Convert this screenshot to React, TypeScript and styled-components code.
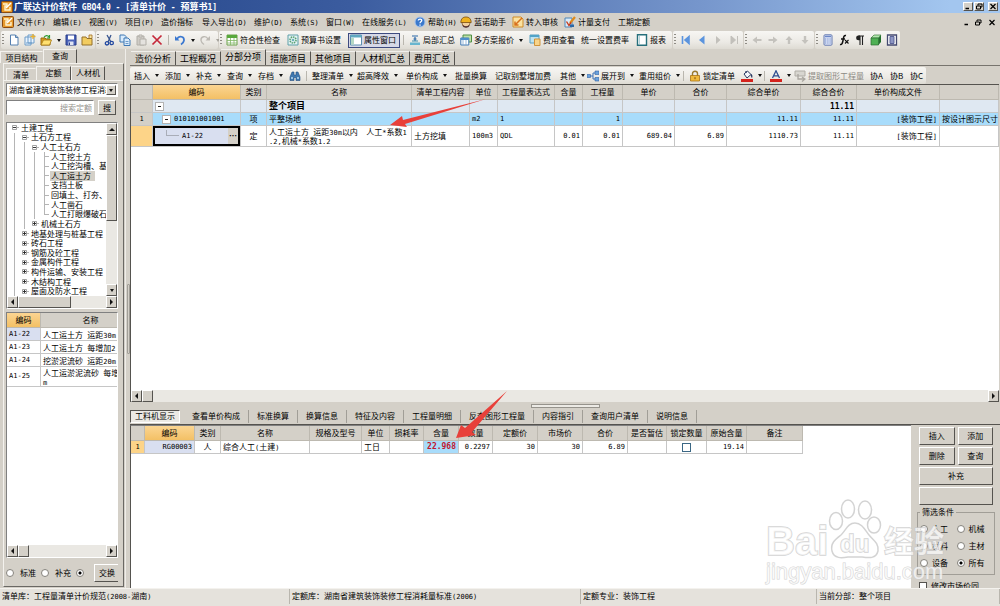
import React from "react";
import styled, { createGlobalStyle, css } from "styled-components";

const face = "#d4d0c8";
const shade = "#808080";
const line = "#c6c6c6";
const cjk = '"Noto Sans CJK SC", sans-serif';
const mono = '"DejaVu Sans Mono", "Noto Sans CJK SC", monospace';

const Global = createGlobalStyle`
  *, *::before, *::after { box-sizing: border-box; }
  body { margin: 0; background: ${face}; }
  body, button, input, select, legend, table { font: 8px/10px ${cjk}; color: #000; }
  button { margin: 0; padding: 0; border: 0; background: none; white-space: nowrap; }
`;

const raised = css`
  border: 1px solid;
  border-color: #fff #55534f #55534f #fff;
  background: ${face};
`;
const sunken = css`
  border: 1px solid;
  border-color: ${shade} #fff #fff ${shade};
`;

/* Latin letters and digits are set in a narrow fixed-width face beside the Chinese text. */
const Latin = styled.span<{ $size?: number }>`
  font-family: ${mono};
  font-size: ${(p) => p.$size ?? 7}px;
  line-height: 1px;
  white-space: pre;
`;

const Mixed = ({ text, size }: { text: string; size?: number }) => (
  <>
    {text.split(/([\x20-\x7e]+)/).map((part, i) =>
      i % 2 ? (
        <Latin key={i} $size={size}>
          {part}
        </Latin>
      ) : (
        part
      )
    )}
  </>
);

/* ---------- icons ---------- */

const Svg = styled.svg`
  display: block;
  flex: none;
  width: 12px;
  height: 12px;
`;

const glyphs: Record<string, React.ReactNode> = {
  app: (
    <>
      <rect x="0.5" y="0.5" width="11" height="11" rx="1" fill="#e79a2c" stroke="#8a4a10" />
      <path d="M2 3h4v2H4v4h5V6" fill="none" stroke="#fff4d0" strokeWidth="1.4" />
      <path d="M5 7l5-5" stroke="#fff" strokeWidth="1.5" />
    </>
  ),
  fresh: <path d="M2.500 1h5l2.500 2.500V11h-7.500zM7.500 1v2.500H10" fill="#fff" stroke="#5580b0" />,
  add: (
    <>
      <path d="M1 3h6v8H1zM4 1h6v8H4z" fill="#e8f3ff" stroke="#6d9cc8" />
      <path d="M9 0v5M6.500 2.500h5" stroke="#e8b030" strokeWidth="1.3" />
      <path d="M2 9h6" stroke="#6d9cc8" />
    </>
  ),
  open: (
    <>
      <path d="M1 4h4l1 1h4v6H1z" fill="#d69a20" stroke="#9a6a10" />
      <path d="M1 11l2.500-5h8L9.500 11z" fill="#ffe070" stroke="#a87c18" strokeWidth=".8" />
      <path d="M4 3.500C5 1 8 1 9 3M9.500 1v3H7" fill="none" stroke="#2e9c34" strokeWidth="1.2" />
    </>
  ),
  save: (
    <>
      <path d="M1 1h10v10H1z" fill="#4a62b8" stroke="#283c88" />
      <path d="M3 1.500h6v4H3z" fill="#fff" />
      <path d="M3.500 7.500h5V11h-5z" fill="#dfe4f4" />
      <path d="M4.500 8.500V11" stroke="#283c88" />
    </>
  ),
  folder: (
    <>
      <path d="M1 3h4l1 1.500h5V11H1z" fill="#f2cc60" stroke="#94702a" />
      <path d="M8 4V1h3v3" fill="#f8e6a0" stroke="#a36d1e" strokeWidth=".8" />
    </>
  ),
  cut: (
    <>
      <path d="M4 1l4 7M8 1L5 8" stroke="#38558f" strokeWidth="1.300" />
      <circle cx="4" cy="9.300" r="1.700" fill="none" stroke="#2349a0" strokeWidth="1.300" />
      <circle cx="8.700" cy="9" r="1.700" fill="none" stroke="#2349a0" strokeWidth="1.300" />
    </>
  ),
  copy: (
    <>
      <path d="M1 1h4.500L7 2.500V8H1z" fill="#d9ebfb" stroke="#3f78b4" />
      <path d="M5 4h4l2 2v5.500H5z" fill="#d9ebfb" stroke="#3f78b4" />
      <path d="M6.500 7.500h3M6.500 9.500h3" stroke="#3f78b4" strokeWidth=".7" />
    </>
  ),
  paste: (
    <>
      <path d="M2 2h7v9H2z" fill="#cfccc6" stroke="#b2afa8" />
      <path d="M4 1h3v2H4zM5 5h6v6H5z" fill="#e4e2de" stroke="#b2afa8" />
    </>
  ),
  remove: <path d="M1.500 1.500l9 9M10.500 1.500l-9 9" stroke="#c5283a" strokeWidth="1.700" />,
  undo: (
    <>
      <path d="M1 2v4.500h4.500z" fill="#3b78d0" />
      <path d="M3 5c2-4 7.500-2.500 7 1.500-.3 2-1.500 3-3 4" fill="none" stroke="#3b78d0" strokeWidth="1.700" />
    </>
  ),
  redo: (
    <>
      <path d="M11 2v4.500H6.500z" fill="#bdbab4" />
      <path d="M9 5c-2-4-7.500-2.500-7 1.500.3 2 1.500 3 3 4" fill="none" stroke="#bdbab4" strokeWidth="1.400" />
    </>
  ),
  sheet: (
    <>
      <path d="M1 1h10v10H1z" fill="#fff" stroke="#6ca04a" />
      <path d="M1 1h10v3H1z" fill="#58a83c" />
      <path d="M1 6.500h10M1 9h10M4.500 4v7M8 4v7" stroke="#82b864" strokeWidth=".8" />
    </>
  ),
  gear: (
    <>
      <path d="M1 1h10v10H1z" fill="#e4f2f4" stroke="#5ea0a8" />
      <circle cx="6" cy="6" r="3" fill="none" stroke="#55a070" strokeWidth="1.500" strokeDasharray="1.500 .8" />
      <circle cx="6" cy="6" r="1.300" fill="#6fb4b8" />
    </>
  ),
  pane: (
    <>
      <path d="M.5 1h11v10H.5z" fill="#fff" stroke="#5d8fb0" />
      <path d="M.5 1h11v2.500H.5z" fill="#5fa8c0" />
      <path d="M1 4h3v6.500H1z" fill="#b5d8c4" />
    </>
  ),
  sum: (
    <>
      <path d="M3 2h6M4.500 5h3M6 3v4" stroke="#2b68a8" strokeWidth="1.200" />
      <path d="M1 8.500h10v2.500H1z" fill="#69b6cf" />
      <path d="M3 7h6" stroke="#3f8fae" />
    </>
  ),
  plans: (
    <>
      <path d="M3 1h8.500v7H3z" fill="#bfe0a8" stroke="#4f8e44" />
      <path d="M.8 4h8v7h-8z" fill="#fff" stroke="#3f78b4" />
      <path d="M.8 4h8v2h-8z" fill="#4f90cc" />
      <path d="M3 6v5M6 6v5" stroke="#7da8d4" strokeWidth=".8" />
    </>
  ),
  fee: (
    <>
      <path d="M1 1h9v8H1z" fill="#bfe3f0" stroke="#5aa0c0" />
      <path d="M1 1h9v2H1z" fill="#52a4c8" />
      <path d="M5.500 5h5.500v6.500H5.500z" fill="#f7d48a" stroke="#d0943a" />
    </>
  ),
  report: (
    <>
      <path d="M1.500 .8h9v10.400h-9z" fill="#fff" stroke="#27707c" strokeWidth="1.400" />
      <path d="M3.500 2v8" stroke="#b5d4da" />
    </>
  ),
  first: <path d="M2.500 2v8M9 2.500L5 6l4 3.500z" fill="#5b94de" stroke="#5b94de" strokeWidth="1.600" />,
  prev: <path d="M8.500 1.500L3 6l5.500 4.500z" fill="#5b94de" />,
  next: <path d="M4 2l4.500 4L4 10z" fill="#c2c0bb" />,
  last: <path d="M9.500 2v8M3 2l4.500 4L3 10z" fill="#c2c0bb" stroke="#c2c0bb" />,
  left: <path d="M1.500 6L6 2.500V5h4.500v2H6v2.500z" fill="#c4c2bd" />,
  right: <path d="M10.500 6L6 2.500V5H1.500v2H6v2.500z" fill="#c4c2bd" />,
  up: <path d="M6 2l3.500 4H7.200v4H4.800V6H2.500z" fill="#c4c2bd" />,
  down: <path d="M6 10l3.500-4H7.200V2H4.800v4H2.500z" fill="#c4c2bd" />,
  calc: (
    <>
      <rect x="2" y=".8" width="8" height="10.400" rx="1" fill="#e6ecfa" stroke="#6378b0" />
      <path d="M3 2.500h6" stroke="#6b87c8" strokeWidth="1.500" />
      <path d="M3 5h6M3 7h6M3 9h6" stroke="#6b87c8" strokeWidth="1.200" strokeDasharray="1.400 .8" />
    </>
  ),
  fx: (
    <>
      <path d="M8 1.500C5.500 1 5.500 4 5 6.500S4 11 2 10.500M3 5h4" fill="none" stroke="#111" strokeWidth="1.500" />
      <path d="M7 6l3.500 3.500M10.500 6L7 9.500" stroke="#111" strokeWidth="1.100" />
    </>
  ),
  para: (
    <>
      <path d="M6 1.500H4.500a2.300 2.300 0 000 4.800H6z" fill="#222" />
      <path d="M6 1.500V11M8.500 1.500V11M4.500 2H10" stroke="#222" strokeWidth="1.100" />
    </>
  ),
  cube: (
    <>
      <path d="M1 4l3-3h7L8.500 4z" fill="#b4e8b0" stroke="#3c7c3c" strokeWidth=".7" />
      <path d="M1 4h7.500v7H1z" fill="#4fb054" stroke="#2b6c30" strokeWidth=".7" />
      <path d="M8.500 4L11 1v7l-2.500 3z" fill="#23702c" />
    </>
  ),
  book: (
    <>
      <path d="M1.500 1h9v10h-9z" fill="#fff" stroke="#444a70" strokeWidth="1.300" />
      <path d="M4 2.500h4v7H4z" fill="#8e97c4" stroke="#5b6398" />
    </>
  ),
  help: (
    <>
      <circle cx="6" cy="6" r="5" fill="#3a78cc" stroke="#a9c6ec" />
      <path d="M4.200 4.500C4.500 2.500 8 2.700 7.700 4.600 7.500 5.700 6 5.700 6 7.200M6 8.400v1.300" fill="none" stroke="#fff" strokeWidth="1.300" />
    </>
  ),
  helmet: (
    <>
      <circle cx="6" cy="7" r="4" fill="#f1cf9c" stroke="#6e4a20" strokeWidth=".7" />
      <path d="M.8 6.500C1 2.500 3 1 6 1s5 1.500 5.200 5.500z" fill="#efb21e" stroke="#7b4d10" strokeWidth=".8" />
      <path d="M3 9.500c1 2 5 2 6 0" stroke="#533" fill="none" strokeWidth="1.300" />
    </>
  ),
  audit: (
    <>
      <path d="M1 1h8l2 2v8H1z" fill="#fbe2a0" stroke="#cf8c28" />
      <path d="M3.500 8.500L10 2M3 5.500V9h3.500" stroke="#d8701c" strokeWidth="1.500" fill="none" />
    </>
  ),
  pay: (
    <>
      <path d="M1 2h7v9H1z" fill="#d9eaf8" stroke="#4e86b8" />
      <path d="M6 7l5-6" stroke="#e08a1a" strokeWidth="2.200" />
      <path d="M2.500 5.500l2.500 4 2-3" stroke="#c63a1a" fill="none" strokeWidth="1.400" />
      <path d="M6 8.500h4V11H6z" fill="#2b68a8" />
    </>
  ),
  find: (
    <>
      <path d="M3 2h2v3h2V2h2l2 5v3.500H7V7.500H5v3H1V7z" fill="#3f78b0" stroke="#234e80" strokeWidth=".6" />
      <path d="M2 8h2M8 8h2" stroke="#b9daf2" strokeWidth="1.300" />
    </>
  ),
  expand: (
    <>
      <path d="M3 6h3V3h3M6 6v3h3" fill="none" stroke="#3c72b8" />
      <path d="M0 4.500h3.500v3H0zM8 1h4v3.500H8zM8 7.500h4V11H8z" fill="#6ba2dc" stroke="#2f62a4" strokeWidth=".6" />
    </>
  ),
  lock: (
    <>
      <path d="M3.500 6V3.500c0-3 5-3 5 0V6" fill="none" stroke="#9a7a30" strokeWidth="1.400" />
      <path d="M1.500 5.500h9V11h-9z" fill="#f0b93c" stroke="#a87418" strokeWidth=".8" />
      <path d="M6 7.200v2" stroke="#7a4d10" />
    </>
  ),
  bucket: (
    <>
      <path d="M3 4l3.500-3L10 4.500 6 8z" fill="#f4f6fa" stroke="#26355e" />
      <path d="M5 3V1M10 4.500c1 1 1 2 .8 3" stroke="#26355e" strokeWidth="1.200" />
      <path d="M0 9h12v3H0z" fill="#d4231d" />
    </>
  ),
  font: (
    <>
      <path d="M2.500 8L6 .8 9.500 8M4 5.800h4" fill="none" stroke="#2f4d90" strokeWidth="1.300" />
      <path d="M0 9h12v3H0z" fill="#d4231d" />
    </>
  ),
  extract: (
    <>
      <path d="M1 1h10v5H1z" fill="#d8d6d0" stroke="#b0ada6" />
      <path d="M4 4v5h6M8 7l3 2-3 2.500" fill="none" stroke="#aaa7a0" strokeWidth="1.300" />
    </>
  ),
};

const Icon = ({ name }: { name: string }) => (
  <Svg viewBox="0 0 12 12" aria-hidden="true">
    {glyphs[name]}
  </Svg>
);

const Caret = styled.i<{ $dim?: boolean; $dir?: "up" | "down" | "left" | "right" }>`
  flex: none;
  width: 0;
  height: 0;
  border: 2px solid transparent;
  ${(p) => {
    const c = p.$dim ? "#a6a39c" : "#111";
    switch (p.$dir) {
      case "up":
        return `border-width: 0 3px 3px; border-bottom-color: ${c};`;
      case "left":
        return `border-width: 3px 3px 3px 0; border-right-color: ${c};`;
      case "right":
        return `border-width: 3px 0 3px 3px; border-left-color: ${c};`;
      default:
        return `border-width: 3px 2px 0; border-top-color: ${c};`;
    }
  }}
`;

/* ---------- window frame ---------- */

const Window = styled.div`
  display: flex;
  flex-direction: column;
  height: 100vh;
  overflow: hidden;
  background: ${face};
`;

const TitleBar = styled.header`
  display: flex;
  align-items: center;
  flex: none;
  gap: 1px;
  height: 13px;
  padding: 0 2px 0 1px;
  background: linear-gradient(90deg, #1e3f83 0%, #3b5c9f 35%, #7696cc 70%, #a3c6ef 95%);
`;

const Title = styled.h1`
  flex: 1;
  margin: 0;
  color: #fff;
  font-size: 9px;
  line-height: 12px;
  font-weight: 700;
  white-space: pre;
`;

const WinButtons = styled.div<{ $flat?: boolean }>`
  display: flex;
  gap: 1px;
  button {
    width: 10px;
    height: 9px;
    ${(p) => !p.$flat && raised}
  }
  button:last-child {
    margin-left: 3px;
  }
  svg {
    width: 8px;
    height: 7px;
  }
`;

const WindowControls = ({ flat }: { flat?: boolean }) => (
  <WinButtons $flat={flat}>
    <button aria-label="最小化">
      <Svg viewBox="0 0 8 7">
        <path d="M1.500 5.500h3.500" stroke="#000" strokeWidth="1.500" />
      </Svg>
    </button>
    <button aria-label="还原">
      <Svg viewBox="0 0 8 7">
        <path d="M3 2.500V1h4v3H5.500M1.500 3h4v3h-4z" fill="none" stroke="#000" />
      </Svg>
    </button>
    <button aria-label="关闭">
      <Svg viewBox="0 0 8 7">
        <path d="M1.500 1l5 5M6.500 1l-5 5" stroke="#000" strokeWidth="1.200" />
      </Svg>
    </button>
  </WinButtons>
);

const MenuBar = styled.nav`
  display: flex;
  align-items: center;
  flex: none;
  height: 18px;
  padding: 0 2px;
`;

const MenuItems = styled.div`
  display: flex;
  flex: 1;
  padding-left: 3px;
`;

const MenuItem = styled.button<{ $w: number }>`
  display: flex;
  align-items: center;
  gap: 2px;
  width: ${(p) => p.$w}px;
  line-height: 12px;
`;

const menus: [string, number, string?][] = [
  ["文件(F)", 36], ["编辑(E)", 36], ["视图(V)", 36], ["项目(P)", 36], ["造价指标", 41],
  ["导入导出(D)", 52], ["维护(D)", 36], ["系统(S)", 36], ["窗口(W)", 36], ["在线服务(L)", 52],
  ["帮助(H)", 46, "help"], ["蓝诺助手", 52, "helmet"], ["转入审核", 52, "audit"],
  ["计量支付", 54, "pay"], ["工期定额", 41],
];

/* ---------- toolbars ---------- */

const ToolRow = styled.div`
  display: flex;
  flex: none;
  height: 18px;
  padding-left: 1px;
  gap: 1px;
`;

const ToolGroup = styled.div<{ $w: number }>`
  display: flex;
  align-items: center;
  flex: none;
  width: ${(p) => p.$w}px;
  border-radius: 2px;
  background: linear-gradient(#f7f6f3, #eceae5 60%, #dedbd3);
`;

const Grip = styled.span`
  flex: none;
  width: 2px;
  height: 12px;
  margin: 0 2px 0 1px;
  background: repeating-linear-gradient(#8f8c85 0 1px, transparent 1px 3px);
`;

const Sep = styled.span`
  flex: none;
  width: 1px;
  height: 10px;
  margin: 0 3px;
  background: #b9b6ae;
`;

const Tool = styled.button<{ $w?: number; $on?: boolean; $dim?: boolean }>`
  display: flex;
  align-items: center;
  flex: none;
  gap: 2px;
  height: 16px;
  padding: 0 2px;
  ${(p) => p.$w && `width: ${p.$w}px;`}
  ${(p) => p.$dim && "color: #8d8a84;"}
  ${(p) => p.$on && "padding: 0 1px; border: 1px solid #3d4a80; background: #d6d8e6; height: 15px;"}
  ${Caret} {
    margin-left: 3px;
  }
`;

type ToolSpec = { icon?: string; text?: string; w?: number; drop?: boolean; on?: boolean; dim?: boolean; sep?: boolean; label?: string };

const Tools = ({ items }: { items: ToolSpec[] }) => (
  <>
    {items.map((t, i) =>
      t.sep ? (
        <Sep key={i} />
      ) : (
        <Tool key={i} $w={t.w} $on={t.on} $dim={t.dim} aria-label={t.text ?? t.label ?? t.icon}>
          {t.icon && <Icon name={t.icon} />}
          {t.text}
          {t.drop && <Caret $dim={t.dim} />}
        </Tool>
      )
    )}
  </>
);

const groups: { w: number; items: ToolSpec[] }[] = [
  {
    w: 94,
    items: [
      { icon: "fresh", w: 16 }, { icon: "add", w: 16 }, { icon: "open", w: 25, drop: true },
      { icon: "save", w: 16 }, { icon: "folder", w: 16 },
    ],
  },
  {
    w: 122,
    items: [
      { icon: "cut", w: 16 }, { icon: "copy", w: 16 }, { icon: "paste", w: 16 }, { icon: "remove", w: 16 },
      { sep: true }, { icon: "undo", w: 25, drop: true }, { icon: "redo", w: 20, drop: true, dim: true },
    ],
  },
  {
    w: 453,
    items: [
      { icon: "sheet", text: "符合性检查", w: 61 }, { icon: "gear", text: "预算书设置", w: 63 },
      { icon: "pane", text: "属性窗口", w: 52, on: true }, { sep: true },
      { icon: "sum", text: "局部汇总", w: 51 }, { icon: "plans", text: "多方案报价", w: 69, drop: true },
      { icon: "fee", text: "费用查看", w: 52 }, { text: "统一设置费率", w: 55 },
      { icon: "report", text: "报表", w: 34 },
    ],
  },
  {
    w: 70,
    items: [{ icon: "first", w: 16 }, { icon: "prev", w: 16 }, { icon: "next", w: 16 }, { icon: "last", w: 16 }],
  },
  {
    w: 70,
    items: [{ icon: "left", w: 16 }, { icon: "right", w: 16 }, { icon: "up", w: 16 }, { icon: "down", w: 16 }],
  },
  {
    w: 85,
    items: [
      { icon: "calc", w: 16 }, { icon: "fx", w: 16 }, { icon: "para", w: 16 },
      { icon: "cube", w: 16 }, { icon: "book", w: 16 },
    ],
  },
];

const editTools: ToolSpec[] = [
  { text: "插入", w: 31, drop: true }, { text: "添加", w: 31, drop: true }, { text: "补充", w: 31, drop: true },
  { text: "查询", w: 31, drop: true }, { text: "存档", w: 31, drop: true }, { icon: "find", w: 16, label: "查找" },
  { sep: true }, { text: "整理清单", w: 45, drop: true }, { text: "超高降效", w: 49, drop: true },
  { text: "单价构成", w: 49, drop: true }, { text: "批量换算", w: 40 }, { text: "记取别墅增加费", w: 65 },
  { text: "其他", w: 27, drop: true }, { icon: "expand", text: "展开到", w: 52, drop: true },
  { text: "重用组价", w: 43, drop: true }, { sep: true }, { icon: "lock", text: "锁定清单", w: 52 },
  { icon: "bucket", w: 22, drop: true }, { sep: true }, { icon: "font", w: 24, drop: true },
  { icon: "extract", text: "提取图形工程量", w: 76, dim: true },
  { text: "协A", w: 20 }, { text: "协B", w: 20 }, { text: "协C", w: 20 },
];

/* ---------- scroll bars ---------- */

const Bar = styled.div<{ $v?: boolean }>`
  display: flex;
  flex: none;
  flex-direction: ${(p) => (p.$v ? "column" : "row")};
  ${(p) => (p.$v ? "width: 11px;" : "height: 12px;")}
  background: #eae8e3;
`;

const BarButton = styled.button`
  display: flex;
  align-items: center;
  justify-content: center;
  flex: none;
  width: 11px;
  height: 12px;
  ${raised}
`;

const Thumb = styled.div<{ $size: number; $v?: boolean }>`
  flex: none;
  ${(p) => (p.$v ? `height: ${p.$size}px;` : `width: ${p.$size}px;`)}
  ${raised}
`;

const Spring = styled.div`
  flex: 1;
`;

const ScrollBar = ({ v, size }: { v?: boolean; size: number }) => (
  <Bar $v={v}>
    <BarButton aria-label={v ? "向上" : "向左"}>
      <Caret $dir={v ? "up" : "left"} />
    </BarButton>
    <Thumb $v={v} $size={size} />
    <Spring />
    <BarButton aria-label={v ? "向下" : "向右"}>
      <Caret $dir={v ? "down" : "right"} />
    </BarButton>
  </Bar>
);

/* ---------- left side ---------- */

const Body = styled.div`
  display: flex;
  flex: 1;
  min-height: 0;
`;

const Side = styled.aside`
  display: flex;
  flex-direction: column;
  flex: none;
  width: 125px;
  min-height: 0;
`;

const SideTabs = styled.div<{ $inner?: boolean }>`
  display: flex;
  align-items: flex-end;
  flex: none;
  height: ${(p) => (p.$inner ? 16 : 14)}px;
  padding-left: ${(p) => (p.$inner ? 2 : 0)}px;
`;

const SideTab = styled.button<{ $w: number; $on?: boolean }>`
  width: ${(p) => p.$w}px;
  height: ${(p) => (p.$on ? 14 : 12)}px;
  padding-bottom: ${(p) => (p.$on ? 2 : 0)}px;
  border-top: 1px solid #f4f2ee;
  border-left: 1px solid #f4f2ee;
  border-right: 1px solid ${(p) => (p.$on ? "#55534f" : face)};
`;

const SideFrame = styled.div`
  display: flex;
  flex-direction: column;
  flex: 1;
  min-height: 0;
  margin: 0 1px 1px 3px;
  border: 1px solid;
  border-color: #f4f2ee #6a6864 #6a6864 #f4f2ee;
`;

const SideInner = styled.div`
  display: flex;
  flex-direction: column;
  flex: 1;
  min-height: 0;
  gap: 3px;
  padding: 2px 5px 3px 2px;
  border-top: 1px solid #f4f2ee;
`;

const SelectWrap = styled.label`
  display: flex;
  align-items: center;
  flex: none;
  height: 14px;
  padding: 1px;
  background: #fff;
  ${sunken}
`;

const Select = styled.select`
  appearance: none;
  flex: 1;
  min-width: 0;
  height: 12px;
  padding: 0 0 0 1px;
  border: 0;
  background: #fff;
  outline: 0;
`;

const DropBox = styled.span`
  display: flex;
  align-items: center;
  justify-content: center;
  width: 10px;
  height: 10px;
  ${raised}
`;

const SearchRow = styled.div`
  display: flex;
  flex: none;
  gap: 4px;
  padding-right: 2px;
`;

const Search = styled.input`
  flex: 1;
  min-width: 0;
  height: 15px;
  padding: 0 1px;
  text-align: right;
  background: #fff;
  ${sunken}
  &::placeholder {
    color: #96938e;
    opacity: 1;
  }
`;

const Push = styled.button<{ $h?: number }>`
  height: ${(p) => p.$h ?? 18}px;
  padding: 0 4px;
  ${raised}
`;

const TreeBox = styled.div`
  display: flex;
  flex-direction: column;
  flex: none;
  height: 187px;
  margin-top: 4px;
  background: #fff;
  ${sunken}
`;

const TreeTop = styled.div`
  display: flex;
  flex: 1;
  min-height: 0;
`;

const Tree = styled.ul`
  display: flex;
  flex-direction: column;
  flex: 1;
  min-width: 0;
  margin: 0;
  padding: 0 0 0 3px;
  overflow: hidden;
  list-style: none;
`;

const TreeItem = styled.li<{ $on?: boolean }>`
  display: flex;
  align-items: center;
  flex: 1;
  min-height: 0;
  white-space: nowrap;
  span {
    padding: 0 1px;
    ${(p) => p.$on && `background: ${face}; padding-right: 4px;`}
  }
`;

const Guide = styled.i<{ $end?: boolean }>`
  flex: none;
  align-self: stretch;
  width: 10px;
  background: linear-gradient(#b5b5b5, #b5b5b5) 4px 0 / 1px ${(p) => (p.$end ? "50%" : "100%")} no-repeat;
`;

const Branch = styled(Guide)`
  background:
    linear-gradient(#b5b5b5, #b5b5b5) 4px 0 / 1px ${(p) => (p.$end ? "50%" : "100%")} no-repeat,
    linear-gradient(#b5b5b5, #b5b5b5) 4px 50% / 5px 1px no-repeat;
`;

const Fold = styled.svg`
  flex: none;
  width: 10px;
  height: 7px;
`;

const FoldMark = ({ open }: { open: boolean }) => (
  <Fold viewBox="0 0 10 7" aria-hidden="true">
    <path d="M2.500 1.500h4v4h-4z" fill="#fff" stroke="#8a8a8a" strokeWidth=".8" />
    <path d={open ? "M3 3.500h3" : "M3 3.500h3M4.500 2v3"} stroke="#222" strokeWidth=".9" />
    <path d="M7 3.500h2" stroke="#b5b5b5" />
  </Fold>
);

type Node = { text: string; depth: number; mark: "open" | "shut" | "leaf" | "end"; on?: boolean };
const nodes: Node[] = [
  { text: "土建工程", depth: 0, mark: "open" },
  { text: "土石方工程", depth: 1, mark: "open" },
  { text: "人工土石方", depth: 2, mark: "open" },
  { text: "人工挖土方", depth: 3, mark: "leaf" },
  { text: "人工挖沟槽、基", depth: 3, mark: "leaf" },
  { text: "人工运土方", depth: 3, mark: "leaf", on: true },
  { text: "支挡土板", depth: 3, mark: "leaf" },
  { text: "回填土、打夯、", depth: 3, mark: "leaf" },
  { text: "人工凿石", depth: 3, mark: "leaf" },
  { text: "人工打眼爆破石", depth: 3, mark: "end" },
  { text: "机械土石方", depth: 2, mark: "shut" },
  { text: "地基处理与桩基工程", depth: 1, mark: "shut" },
  { text: "砖石工程", depth: 1, mark: "shut" },
  { text: "钢筋及砼工程", depth: 1, mark: "shut" },
  { text: "金属构件工程", depth: 1, mark: "shut" },
  { text: "构件运输、安装工程", depth: 1, mark: "shut" },
  { text: "木结构工程", depth: 1, mark: "shut" },
  { text: "屋面及防水工程", depth: 1, mark: "shut" },
];

const ListBox = styled.div`
  display: flex;
  flex-direction: column;
  flex: 1;
  min-height: 0;
  background: #fff;
  ${sunken}
`;

const Clip = styled.div`
  flex: 1;
  min-height: 0;
  overflow: hidden;
`;

const SideFoot = styled.div`
  display: flex;
  align-items: center;
  flex: none;
  gap: 5px;
  height: 22px;
  padding-top: 2px;
  overflow: hidden;
`;

const Option = styled.label`
  display: flex;
  align-items: center;
  gap: 6px;
  white-space: nowrap;
`;

const Radio = styled.input.attrs({ type: "radio" })`
  appearance: none;
  flex: none;
  width: 8px;
  height: 8px;
  margin: 0;
  border: 1px solid #85827c;
  border-radius: 50%;
  background: #fff;
  &:checked {
    background: radial-gradient(circle, #000 0 1px, #fff 2px);
  }
`;

/* ---------- tables ---------- */

const Table = styled.table<{ $w?: number }>`
  width: ${(p) => (p.$w ? `${p.$w}px` : "100%")};
  border-collapse: separate;
  border-spacing: 0;
  table-layout: fixed;
`;

const Th = styled.th<{ $hot?: boolean }>`
  height: 15px;
  padding: 0;
  overflow: hidden;
  border-right: 1px solid #bdb9b0;
  border-bottom: 1px solid #bdb9b0;
  background: ${(p) => (p.$hot ? "linear-gradient(#fbd592, #f3c065)" : face)};
  font-weight: 400;
  white-space: nowrap;
`;

const tones: Record<string, string> = {
  sum: "#dfe8f2",
  pick: "#a8dcfb",
  code: "#d9dff0",
  mark: "#fdd488",
  head: face,
};

const Td = styled.td<{ $h?: number; $tone?: string; $align?: string; $bold?: boolean; $mono?: boolean }>`
  height: ${(p) => p.$h ?? 13}px;
  padding: 0 2px;
  overflow: hidden;
  border-right: 1px solid ${line};
  border-bottom: 1px solid ${line};
  background: ${(p) => (p.$tone ? tones[p.$tone] : "#fff")};
  text-align: ${(p) => p.$align ?? "left"};
  white-space: nowrap;
  ${(p) => p.$mono && `font: 7px/9px ${mono};`}
  ${(p) => p.$bold && `font-weight: 700; font-size: ${p.$mono ? 8 : 9}px;`}
`;

const Wrap = styled.div`
  line-height: 9px;
  white-space: pre;
`;

const RedValue = styled.b`
  color: #c01830;
  font-size: 8px;
`;

const CodeCell = styled(Td)`
  padding: 0;
`;

const CodeRow = styled.div<{ $focus?: boolean; $depth: number }>`
  display: flex;
  align-items: center;
  gap: 3px;
  height: ${(p) => (p.$focus ? 20 : 12)}px;
  padding-left: ${(p) => p.$depth * 7 + 2}px;
  ${(p) => p.$focus && "border: 2px solid #000; padding-left: 11px;"}
`;

const Elbow = styled.i`
  width: 13px;
  height: 6px;
  margin-bottom: 6px;
  border-left: 1px solid #a9adb8;
  border-bottom: 1px solid #a9adb8;
`;

const Minus = styled.i`
  display: flex;
  align-items: center;
  width: 9px;
  height: 9px;
  padding: 0 2px;
  border: 1px solid #b4b4b4;
  background: #fff;
  &::before {
    content: "";
    flex: 1;
    height: 1px;
    background: #222;
  }
`;

const CellCode = styled.span`
  flex: 1;
`;

const More = styled.button`
  width: 10px;
  height: 16px;
  background: ${face};
  font-weight: 700;
`;

/* ---------- main side ---------- */

const Splitter = styled.div`
  display: flex;
  align-items: center;
  flex: none;
  width: 5px;
  border-left: 1px solid #efede9;
`;

const SplitGrip = styled.i`
  width: 3px;
  height: 70px;
  margin-left: 1px;
  border: 1px solid #a19e97;
  border-radius: 1px;
`;

const Main = styled.main`
  display: flex;
  flex-direction: column;
  flex: 1;
  min-width: 0;
  min-height: 0;
`;

const PageTabs = styled.div`
  display: flex;
  align-items: flex-end;
  flex: none;
  height: 17px;
  padding-left: 1px;
  border-bottom: 1px solid #77746e;
`;

const PageTab = styled.button<{ $on?: boolean }>`
  height: ${(p) => (p.$on ? 16 : 14)}px;
  padding: 0 4px ${(p) => (p.$on ? 2 : 0)}px;
  border-top: 1px solid #f2f0ec;
  border-right: 1px solid #55534f;
  font-size: 9px;
  line-height: 12px;
`;

const EditBar = styled(ToolGroup)`
  height: 17px;
  margin-top: 1px;
  padding-left: 2px;
`;

const Grid = styled.section`
  display: flex;
  flex-direction: column;
  flex: 1;
  min-height: 0;
  margin-right: 1px;
  border: 1px solid #55534f;
  border-width: 1px 0 0 1px;
  background: #fff;
`;

const Handle = styled.div`
  display: flex;
  justify-content: center;
  flex: none;
  height: 6px;
  padding-top: 2px;
  i {
    width: 69px;
    height: 4px;
    border: 1px solid #96938c;
    background: #eceae5;
  }
`;

const Lower = styled.section`
  display: flex;
  flex-direction: column;
  flex: none;
  height: 186px;
`;

const DetailTabs = styled.div`
  display: flex;
  align-items: center;
  flex: none;
  height: 16px;
`;

const DetailTab = styled.button<{ $on?: boolean }>`
  height: 13px;
  padding: 0 8px;
  border-right: 1px solid #a19e97;
  ${(p) =>
    p.$on &&
    css`
      margin-right: 4px;
      padding: 0 4px;
      border: 1px solid;
      border-color: #55534f #fff #fff #55534f;
      background: #eceae5;
    `}
`;

const LowerBody = styled.div`
  display: flex;
  flex: 1;
  min-height: 0;
  border-top: 1px solid #55534f;
`;

const DetailGrid = styled.div`
  flex: 1;
  min-width: 0;
  overflow: hidden;
  border-top: 1px solid ${shade};
  border-left: 1px solid #55534f;
  background: #fff;
`;

const Actions = styled.div`
  display: grid;
  grid-template-columns: 1fr 1fr;
  grid-auto-rows: 18px;
  align-content: start;
  flex: none;
  gap: 2px 3px;
  width: 89px;
  padding: 2px 7px 0 8px;
  overflow: hidden;
`;

const WidePush = styled(Push)`
  grid-column: 1 / -1;
`;

const Filter = styled.fieldset`
  display: grid;
  grid-column: 1 / -1;
  grid-row: span 3;
  grid-template-columns: 1fr 1fr;
  align-items: center;
  min-width: 0;
  height: 68px;
  margin: 0 -2px;
  padding: 4px 1px 3px 2px;
  border: 1px solid #a19e97;
  legend {
    padding: 0 2px;
  }
  ${Option} {
    gap: 4px;
  }
`;

const Sync = styled.label`
  display: flex;
  grid-column: 1 / -1;
  gap: 4px;
  padding-top: 14px;
  white-space: nowrap;
  input {
    appearance: none;
    width: 8px;
    height: 8px;
    margin: 1px 0;
    border: 1px solid #55534f;
    background: #fff;
  }
`;

const Check = styled.input.attrs({ type: "checkbox" })`
  appearance: none;
  display: block;
  width: 9px;
  height: 9px;
  margin: 0 auto;
  border: 1px solid #3b6784;
  background: #fff;
`;

const Status = styled.footer`
  display: grid;
  grid-template-columns: 290fr 291fr 236fr 183fr;
  flex: none;
  height: 18px;
  padding-bottom: 2px;
  border-top: 1px solid #f4f2ee;
  background: #e5e2dc;
`;

const StatusCell = styled.span`
  padding: 0 2px;
  border-right: 1px solid #b9b6ae;
  line-height: 14px;
  white-space: nowrap;
`;

const Overlay = styled.svg<{ $x: number; $y: number; $w: number; $h: number }>`
  position: absolute;
  left: ${(p) => p.$x}px;
  top: ${(p) => p.$y}px;
  width: ${(p) => p.$w}px;
  height: ${(p) => p.$h}px;
  pointer-events: none;
`;

const Watermark = styled.svg`
  position: absolute;
  right: 52px;
  bottom: 16px;
  width: 184px;
  height: 94px;
  pointer-events: none;
  text {
    font-family: "Liberation Sans", "Noto Sans CJK SC", sans-serif;
    paint-order: stroke;
  }
`;

const Cols = ({ widths }: { widths: (number | undefined)[] }) => (
  <colgroup>
    {widths.map((w, i) => (
      <col key={i} width={w} />
    ))}
  </colgroup>
);

const billHeads = ["", "编码", "类别", "名称", "清单工程内容", "单位", "工程量表达式", "含量", "工程量", "单价", "合价", "综合单价", "综合合价", "单价构成文件", ""];
const detailHeads = ["", "编码", "类别", "名称", "规格及型号", "单位", "损耗率", "含量", "数量", "定额价", "市场价", "合价", "是否暂估", "锁定数量", "原始含量", "备注"];
const quotas = [["A1-22", "人工运土方 运距30m"], ["A1-23", "人工运土方 每增加2"], ["A1-24", "挖淤泥流砂 运距20m"], ["A1-25", "人工运淤泥流砂 每增\nm"]];
const filters = ["人工", "机械", "材料", "主材", "设备", "所有"];
const pageTabs = ["造价分析", "工程概况", "分部分项", "措施项目", "其他项目", "人材机汇总", "费用汇总"];
const detailTabs = ["工料机显示", "查看单价构成", "标准换算", "换算信息", "特征及内容", "工程量明细", "反查图形工程量", "内容指引", "查询用户清单", "说明信息"];
const statuses = ["清单库：工程量清单计价规范(2008-湖南)", "定额库：湖南省建筑装饰装修工程消耗量标准(2006)", "定额专业：装饰工程", "当前分部：整个项目"];

const SidePanel = () => (
  <Side>
    <SideTabs>
      <SideTab $w={43}>项目结构</SideTab>
      <SideTab $w={34} $on>查询</SideTab>
    </SideTabs>
    <SideFrame>
      <SideTabs $inner>
        <SideTab $w={30}>清单</SideTab>
        <SideTab $w={35} $on>定额</SideTab>
        <SideTab $w={34} $on>人材机</SideTab>
      </SideTabs>
      <SideInner>
        <SelectWrap>
          <Select aria-label="定额库">
            <option>湖南省建筑装饰装修工程消耗量标准</option>
          </Select>
          <DropBox>
            <Caret />
          </DropBox>
        </SelectWrap>
        <SearchRow>
          <Search aria-label="搜索定额" placeholder="搜索定额" />
          <Push $h={15}>搜</Push>
        </SearchRow>
        <TreeBox>
          <TreeTop>
            <Tree>
              {nodes.map((n) => (
                <TreeItem key={n.text} $on={n.on}>
                  {Array.from({ length: n.depth }, (_, i) => (
                    <Guide key={i} />
                  ))}
                  {n.mark === "leaf" || n.mark === "end" ? (
                    <Branch $end={n.mark === "end"} />
                  ) : (
                    <FoldMark open={n.mark === "open"} />
                  )}
                  <span>{n.text}</span>
                </TreeItem>
              ))}
            </Tree>
            <ScrollBar v size={86} />
          </TreeTop>
          <ScrollBar size={53} />
        </TreeBox>
        <ListBox>
          <Clip>
            <Table $w={134}>
              <Cols widths={[34, 100]} />
              <thead>
                <tr>
                  <Th $hot>编码</Th>
                  <Th>名称</Th>
                </tr>
              </thead>
              <tbody>
                {quotas.map(([code, name], i) => (
                  <tr key={code}>
                    <Td $mono $tone={i === 0 ? "code" : undefined} $h={i === 3 ? 20 : 13}>{code}</Td>
                    <Td>
                      <Wrap><Mixed text={name} /></Wrap>
                    </Td>
                  </tr>
                ))}
              </tbody>
            </Table>
          </Clip>
          <ScrollBar size={11} />
        </ListBox>
        <SideFoot>
          <Option><Radio name="kind" />标准</Option>
          <Option><Radio name="kind" />补充</Option>
          <Radio name="kind" defaultChecked aria-label="全部" />
          <Spring />
          <Push>交换</Push>
        </SideFoot>
      </SideInner>
    </SideFrame>
  </Side>
);

const BillTable = () => (
  <Table>
    <Cols widths={[22, 88, 26, 145, 58, 28, 57, 28, 40, 52, 52, 74, 56, 83, undefined]} />
    <thead>
      <tr>
        {billHeads.map((h, i) => (
          <Th key={i} $hot={i === 1}>{h}</Th>
        ))}
      </tr>
    </thead>
    <tbody>
      <tr>
        <Td $tone="head" />
        <CodeCell $tone="sum">
          <CodeRow $depth={0}><Minus /></CodeRow>
        </CodeCell>
        <Td $tone="sum" />
        <Td $tone="sum" $bold>整个项目</Td>
        {Array.from({ length: 8 }, (_, i) => (
          <Td key={i} $tone="sum" />
        ))}
        <Td $tone="sum" $mono $bold $align="right">11.11</Td>
        <Td $tone="sum" />
        <Td $tone="sum" />
      </tr>
      <tr>
        <Td $tone="head" $align="center" $mono>1</Td>
        <CodeCell $tone="pick" $mono>
          <CodeRow $depth={1}><Minus /><CellCode>010101001001</CellCode></CodeRow>
        </CodeCell>
        <Td $tone="pick" $align="center">项</Td>
        <Td $tone="pick">平整场地</Td>
        <Td $tone="pick" />
        <Td $tone="pick" $mono>m2</Td>
        <Td $tone="pick" $mono>1</Td>
        <Td $tone="pick" />
        <Td $tone="pick" $mono $align="right">1</Td>
        <Td $tone="pick" />
        <Td $tone="pick" />
        <Td $tone="pick" $mono $align="right">11.11</Td>
        <Td $tone="pick" $mono $align="right">11.11</Td>
        <Td $tone="pick" $align="right"><Mixed text="[装饰工程]" /></Td>
        <Td $tone="pick">按设计图示尺寸</Td>
      </tr>
      <tr>
        <Td $tone="mark" $h={20} />
        <CodeCell $tone="code" $mono>
          <CodeRow $depth={1} $focus><Elbow /><CellCode>A1-22</CellCode><More aria-label="更多">…</More></CodeRow>
        </CodeCell>
        <Td $align="center">定</Td>
        <Td><Wrap><Mixed text={"人工运土方 运距30m以内  人工*系数1\n.2,机械*系数1.2"} /></Wrap></Td>
        <Td>土方挖填</Td>
        <Td $mono>100m3</Td>
        <Td $mono>QDL</Td>
        <Td $mono $align="right">0.01</Td>
        <Td $mono $align="right">0.01</Td>
        <Td $mono $align="right">689.04</Td>
        <Td $mono $align="right">6.89</Td>
        <Td $mono $align="right">1110.73</Td>
        <Td $mono $align="right">11.11</Td>
        <Td $align="right"><Mixed text="[装饰工程]" /></Td>
        <Td />
      </tr>
    </tbody>
  </Table>
);

const DetailTable = () => (
  <Table $w={672}>
    <Cols widths={[14, 50, 26, 89, 52, 28, 34, 35, 34, 45, 45, 45, 39, 40, 40, 56]} />
    <thead>
      <tr>
        {detailHeads.map((h, i) => (
          <Th key={i} $hot={i === 1}>{h}</Th>
        ))}
      </tr>
    </thead>
    <tbody>
      <tr>
        <Td $tone="mark" $mono $align="center">1</Td>
        <Td $tone="code" $mono $align="right">RG00003</Td>
        <Td $align="center">人</Td>
        <Td><Mixed text="综合人工(土建)" /></Td>
        <Td />
        <Td>工日</Td>
        <Td />
        <Td $tone="pick" $mono $align="right"><RedValue>22.968</RedValue></Td>
        <Td $mono $align="right">0.2297</Td>
        <Td $mono $align="right">30</Td>
        <Td $mono $align="right">30</Td>
        <Td $mono $align="right">6.89</Td>
        <Td />
        <Td><Check aria-label="锁定数量" /></Td>
        <Td $mono $align="right">19.14</Td>
        <Td />
      </tr>
    </tbody>
  </Table>
);

export default function App() {
  return (
    <Window>
      <Global />
      <TitleBar>
        <Icon name="app" />
        <Title><Mixed text="广联达计价软件 GBQ4.0 - [清单计价 - 预算书1]" size={8} /></Title>
        <WindowControls />
      </TitleBar>
      <MenuBar>
        <Icon name="app" />
        <MenuItems>
          {menus.map(([text, w, icon]) => (
            <MenuItem key={text} $w={w}>
              {icon && <Icon name={icon} />}
              <span><Mixed text={text} /></span>
            </MenuItem>
          ))}
        </MenuItems>
        <WindowControls flat />
      </MenuBar>
      <ToolRow>
        {groups.map((g, i) => (
          <ToolGroup key={i} $w={g.w}>
            <Grip />
            <Tools items={g.items} />
          </ToolGroup>
        ))}
      </ToolRow>
      <Body>
        <SidePanel />
        <Splitter><SplitGrip /></Splitter>
        <Main>
          <PageTabs>
            {pageTabs.map((t) => (
              <PageTab key={t} $on={t === "分部分项"}>{t}</PageTab>
            ))}
          </PageTabs>
          <EditBar $w={796}>
            <Tools items={editTools} />
          </EditBar>
          <Grid>
            <Clip><BillTable /></Clip>
            <ScrollBar size={11} />
          </Grid>
          <Lower>
            <Handle><i /></Handle>
            <DetailTabs>
              {detailTabs.map((t, i) => (
                <DetailTab key={t} $on={i === 0}>{t}</DetailTab>
              ))}
            </DetailTabs>
            <LowerBody>
              <DetailGrid><DetailTable /></DetailGrid>
              <Actions>
                <Push>插入</Push>
                <Push>添加</Push>
                <Push>删除</Push>
                <Push>查询</Push>
                <WidePush>补充</WidePush>
                <WidePush aria-label="空白" />
                <Filter>
                  <legend>筛选条件</legend>
                  {filters.map((f) => (
                    <Option key={f}>
                      <Radio name="filter" defaultChecked={f === "所有"} />
                      {f}
                    </Option>
                  ))}
                </Filter>
                <Sync><input type="checkbox" />修改市场价同</Sync>
              </Actions>
            </LowerBody>
          </Lower>
        </Main>
      </Body>
      <Status>
        {statuses.map((s) => (
          <StatusCell key={s}><Mixed text={s} /></StatusCell>
        ))}
      </Status>
      <Overlay $x={388} $y={96} $w={100} $h={34} viewBox="0 0 100 34" aria-hidden="true">
        <path d="M2 29L14 20l1 4L98 3 17 28l2 3z" fill="#e8403a" />
      </Overlay>
      <Overlay $x={454} $y={388} $w={56} $h={52} viewBox="0 0 56 52" aria-hidden="true">
        <path d="M2 50L7 37l4 3L53 3 18 44l4 3z" fill="#e8403a" />
      </Overlay>
      <Watermark viewBox="0 0 184 94" aria-hidden="true">
        <g fill="#fff" fillOpacity=".7" stroke="#c8c8c8" strokeOpacity=".8" strokeWidth="1.500">
          <ellipse cx="72" cy="25" rx="6.500" ry="8.500" />
          <ellipse cx="84" cy="13" rx="6.500" ry="9" />
          <ellipse cx="101" cy="14" rx="6.500" ry="9" />
          <ellipse cx="110" cy="29" rx="6.500" ry="8" />
          <path d="M91 27c-7 0-9 7-14 12-5 4-11 8-9 16 2 8 10 7 16 6h14c7 1 14 2 16-6 1-8-5-11-9-16-4-5-7-12-14-12z" />
          <text x="2" y="59" fontSize="40" fontWeight="700">Bai</text>
          <text x="76" y="56" fontSize="24" fontWeight="700">du</text>
          <text x="120" y="56" fontSize="30" fontWeight="700">经验</text>
          <text x="2" y="83" fontSize="22" strokeWidth="1">jingyan.baidu.com</text>
        </g>
      </Watermark>
    </Window>
  );
}
